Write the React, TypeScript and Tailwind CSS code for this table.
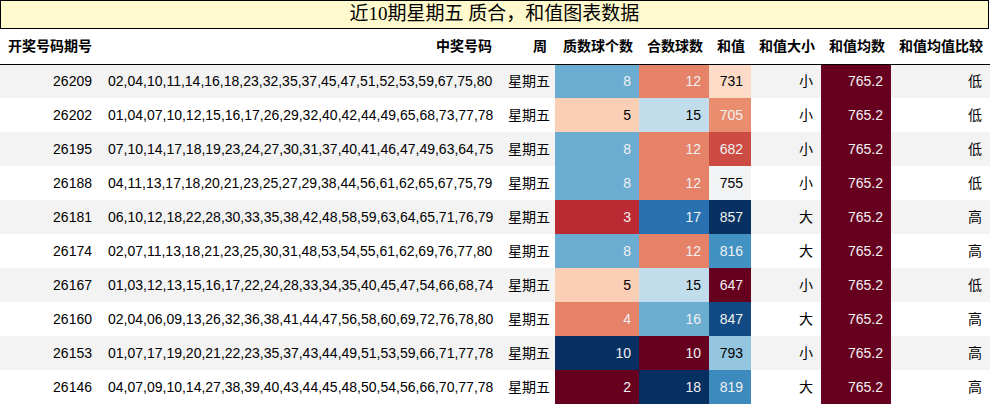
const LIGHT = "text-[#f1f1f1]";
const DARK = "text-black";

type Cell = { v: string; bg: string; fg: string };

type Row = {
  id: string;
  nums: string;
  prime: Cell;
  comp: Cell;
  sum: Cell;
  size: string;
  cmp: string;
};

const p8 = { v: "8", bg: "bg-[#6bacd1]", fg: LIGHT };
const p5 = { v: "5", bg: "bg-[#fbceb6]", fg: DARK };
const c12 = { v: "12", bg: "bg-[#e58267]", fg: LIGHT };
const c15 = { v: "15", bg: "bg-[#c1ddec]", fg: DARK };

const rows: Row[] = [
  {
    id: "26209",
    nums: "02,04,10,11,14,16,18,23,32,35,37,45,47,51,52,53,59,67,75,80",
    prime: p8,
    comp: c12,
    sum: { v: "731", bg: "bg-[#fddbc7]", fg: DARK },
    size: "小",
    cmp: "低",
  },
  {
    id: "26202",
    nums: "01,04,07,10,12,15,16,17,26,29,32,40,42,44,49,65,68,73,77,78",
    prime: p5,
    comp: c15,
    sum: { v: "705", bg: "bg-[#ea8c6e]", fg: LIGHT },
    size: "小",
    cmp: "低",
  },
  {
    id: "26195",
    nums: "07,10,14,17,18,19,23,24,27,30,31,37,40,41,46,47,49,63,64,75",
    prime: p8,
    comp: c12,
    sum: { v: "682", bg: "bg-[#cc4c44]", fg: LIGHT },
    size: "小",
    cmp: "低",
  },
  {
    id: "26188",
    nums: "04,11,13,17,18,20,21,23,25,27,29,38,44,56,61,62,65,67,75,79",
    prime: p8,
    comp: c12,
    sum: { v: "755", bg: "bg-[#f2f4f6]", fg: DARK },
    size: "小",
    cmp: "低",
  },
  {
    id: "26181",
    nums: "06,10,12,18,22,28,30,33,35,38,42,48,58,59,63,64,65,71,76,79",
    prime: { v: "3", bg: "bg-[#bb2a33]", fg: LIGHT },
    comp: { v: "17", bg: "bg-[#2a71b2]", fg: LIGHT },
    sum: { v: "857", bg: "bg-[#053061]", fg: LIGHT },
    size: "大",
    cmp: "高",
  },
  {
    id: "26174",
    nums: "02,07,11,13,18,21,23,25,30,31,48,53,54,55,61,62,69,76,77,80",
    prime: p8,
    comp: c12,
    sum: { v: "816", bg: "bg-[#4192c2]", fg: LIGHT },
    size: "大",
    cmp: "高",
  },
  {
    id: "26167",
    nums: "01,03,12,13,15,16,17,22,24,28,33,34,35,40,45,47,54,66,68,74",
    prime: p5,
    comp: c15,
    sum: { v: "647", bg: "bg-[#67001f]", fg: LIGHT },
    size: "小",
    cmp: "低",
  },
  {
    id: "26160",
    nums: "02,04,06,09,13,26,32,36,38,41,44,47,56,58,60,69,72,76,78,80",
    prime: { v: "4", bg: "bg-[#e58267]", fg: LIGHT },
    comp: { v: "16", bg: "bg-[#6bacd1]", fg: LIGHT },
    sum: { v: "847", bg: "bg-[#124a85]", fg: LIGHT },
    size: "大",
    cmp: "高",
  },
  {
    id: "26153",
    nums: "01,07,17,19,20,21,22,23,35,37,43,44,49,51,53,59,66,71,77,78",
    prime: { v: "10", bg: "bg-[#053061]", fg: LIGHT },
    comp: { v: "10", bg: "bg-[#67001f]", fg: LIGHT },
    sum: { v: "793", bg: "bg-[#94c6df]", fg: DARK },
    size: "小",
    cmp: "高",
  },
  {
    id: "26146",
    nums: "04,07,09,10,14,27,38,39,40,43,44,45,48,50,54,56,66,70,77,78",
    prime: { v: "2", bg: "bg-[#67001f]", fg: LIGHT },
    comp: { v: "18", bg: "bg-[#053061]", fg: LIGHT },
    sum: { v: "819", bg: "bg-[#3d8abf]", fg: LIGHT },
    size: "大",
    cmp: "高",
  },
];

const headers = [
  "开奖号码期号",
  "中奖号码",
  "周",
  "质数球个数",
  "合数球数",
  "和值",
  "和值大小",
  "和值均数",
  "和值均值比较",
];

const td = "px-2 text-right align-middle whitespace-nowrap";

export default function App() {
  return (
    <div className="w-[990px] bg-white text-[14px] text-black font-['Liberation_Sans','Noto_Sans_CJK_SC',sans-serif]">
      <div className="h-[29px] w-[989px] border border-black bg-[#fffacd] text-center text-[19px] leading-[26px] font-['Liberation_Serif','Noto_Sans_CJK_SC',serif]">
        近10期星期五 质合，和值图表数据
      </div>

      <table className="w-[990px] table-fixed border-collapse">
        <colgroup>
          <col className="w-[100px]" />
          <col className="w-[400px]" />
          <col className="w-[55px]" />
          <col className="w-[84px]" />
          <col className="w-[70px]" />
          <col className="w-[42px]" />
          <col className="w-[70px]" />
          <col className="w-[70px]" />
          <col className="w-[99px]" />
        </colgroup>
        <thead>
          <tr className="h-[35px] border-b border-black">
            {headers.map((h) => (
              <th key={h} className={`${td} font-bold`}>
                {h}
              </th>
            ))}
          </tr>
        </thead>
        <tbody>
          {rows.map((r, i) => (
            <tr key={r.id} className={`h-[34px] ${i % 2 === 0 ? "bg-[#f3f3f3]" : "bg-white"}`}>
              <td className={td}>{r.id}</td>
              <td className={td}>{r.nums}</td>
              <td className={td}>星期五</td>
              <td className={`${td} ${r.prime.bg} ${r.prime.fg}`}>{r.prime.v}</td>
              <td className={`${td} ${r.comp.bg} ${r.comp.fg}`}>{r.comp.v}</td>
              <td className={`${td} ${r.sum.bg} ${r.sum.fg}`}>{r.sum.v}</td>
              <td className={td}>{r.size}</td>
              <td className={`${td} bg-[#67001f] text-[#f1f1f1]`}>765.2</td>
              <td className={td}>{r.cmp}</td>
            </tr>
          ))}
        </tbody>
      </table>
    </div>
  );
}
